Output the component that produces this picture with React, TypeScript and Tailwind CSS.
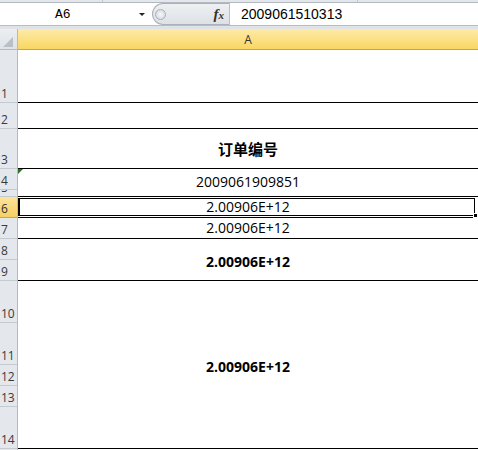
import React from 'react';

type RowHead = { label: string; cls: string; active?: boolean };

const rowHeads: RowHead[] = [
  { label: '1', cls: 'h-[53px]' },
  { label: '2', cls: 'h-[26px]' },
  { label: '3', cls: 'h-[40px]' },
  { label: '4', cls: 'h-[21px]' },
  { label: '5', cls: 'h-[7px]' },
  { label: '6', cls: 'h-[21px]', active: true },
  { label: '7', cls: 'h-[21px]' },
  { label: '8', cls: 'h-[21px]' },
  { label: '9', cls: 'h-[21px]' },
  { label: '10', cls: 'h-[42px]' },
  { label: '11', cls: 'h-[42px]' },
  { label: '12', cls: 'h-[21px]' },
  { label: '13', cls: 'h-[21px]' },
  { label: '14', cls: 'h-[42px]' },
];

function FormulaBar() {
  return (
    <div className="flex flex-col shrink-0">
      {/* ribbon edge */}
      <div className="flex h-[3px] bg-[#e3e6ea] border-b border-[#b3b9c1]">
        <div className="w-[103px] border-r border-[#c2c7ce]" />
        <div className="w-[255px] border-r border-[#c2c7ce]" />
      </div>
      <div className="flex h-[23px] border-b border-[#b7bdc5] bg-white">
        {/* name box */}
        <div className="w-[152px] flex items-center bg-white">
          <span className="pl-[55px] font-['Liberation_Mono',monospace] text-[13px] leading-none text-black">A6</span>
          <span className="ml-auto mr-[7px] w-0 h-0 border-l-[3px] border-r-[3px] border-t-[3px] border-l-transparent border-r-transparent border-t-[#222]" />
        </div>
        {/* splitter + fx */}
        <div className="w-[77px] flex items-center rounded-l-full border border-r-0 border-[#aab1ba] bg-linear-to-b from-[#eef0f3] to-[#dde1e6]">
          <div className="ml-[2px] w-[11px] h-[11px] rounded-full border border-[#a9b0b9] bg-radial from-[#f7f8fa] to-[#cfd4da]" />
          <span className="ml-auto mr-[5px] font-['Liberation_Serif',serif] italic font-bold text-[#333] text-[15px] leading-none">
            f<span className="text-[11px]">x</span>
          </span>
        </div>
        <div className="w-px bg-[#b9bfc7]" />
        <div className="flex-1 flex items-center pl-[11px] font-['Liberation_Sans',sans-serif] text-[14px] leading-none text-black">
          2009061510313
        </div>
      </div>
      <div className="h-[3px] bg-[#dfe3e8]" />
    </div>
  );
}

function RowHeaders() {
  return (
    <div className="w-[18px] shrink-0 flex flex-col border-r border-[#b3bac3] bg-[#e4e7eb]">
      <div className="h-[21px] shrink-0 border-b border-[#b3bac3] bg-linear-to-b from-[#eceef1] to-[#dfe3e8]">
        <svg width="17" height="20" viewBox="0 0 17 20" className="block">
          <polygon points="13,8 13,18 3,18" fill="#b9bfc7" />
        </svg>
      </div>
      {rowHeads.map((r) => (
        <div
          key={r.label}
          className={
            r.active
              ? `${r.cls} shrink-0 flex items-end overflow-hidden border-b border-[#c9a84c] bg-linear-to-b from-[#fce49a] to-[#f7d063] pl-[1px] pb-[1px] font-['Open_Sans',sans-serif] text-[12px] leading-[14px] text-[#2f2f2f]`
              : `${r.cls} shrink-0 flex items-end overflow-hidden border-b border-[#c5cad1] pl-[1px] pb-[1px] font-['Open_Sans',sans-serif] text-[12px] leading-[14px] text-[#3a3a3a]`
          }
        >
          {r.label}
        </div>
      ))}
      <div className="flex-1" />
    </div>
  );
}

function ColumnA() {
  return (
    <div className="flex-1 flex flex-col font-['Open_Sans',sans-serif] text-[14px] leading-[16px] text-black">
      <div className="h-[21px] shrink-0 flex items-end justify-center pb-[2px] border-b border-[#c5a54c] bg-linear-to-b from-[#fdeaa6] to-[#f9d760] font-['Open_Sans',sans-serif] text-[12px] leading-[14px] text-[#333]">
        A
      </div>
      <div className="h-[53px] shrink-0 border-b border-black" />
      <div className="h-[26px] shrink-0 border-b border-black" />
      <div className="h-[40px] shrink-0 flex items-center justify-center border-b border-black font-['Noto_Sans_CJK_SC',sans-serif] font-bold text-[15px]">
        订单编号
      </div>
      <div className="h-[21px] shrink-0 relative flex items-end justify-center">
        <svg width="5" height="5" viewBox="0 0 5 5" className="absolute left-0 top-0">
          <polygon points="0,0 5,0 0,5" fill="#217a21" />
        </svg>
        2009061909851
      </div>
      <div className="h-[7px] shrink-0 border-b border-black" />
      <div className="h-[21px] shrink-0 relative flex items-end justify-center pb-[2px] border-b border-black">
        2.00906E+12
        <div className="absolute top-[1px] bottom-[1px] left-0 right-[3px] border-y border-l-2 border-r border-black" />
        <div className="absolute top-[16px] right-0 w-[5px] h-[5px] bg-black border border-white" />
      </div>
      <div className="h-[21px] shrink-0 flex items-end justify-center pb-[2px] border-b border-black">
        2.00906E+12
      </div>
      <div className="h-[42px] shrink-0 flex items-end justify-center pb-[10px] border-b border-black font-bold">
        2.00906E+12
      </div>
      <div className="h-[168px] shrink-0 flex items-end justify-center pb-[73px] border-b border-black font-bold">
        2.00906E+12
      </div>
      <div className="flex-1" />
    </div>
  );
}

export default function App() {
  return (
    <div className="w-[478px] h-[450px] overflow-hidden bg-white flex flex-col">
      <FormulaBar />
      <div className="flex flex-1 min-h-0">
        <RowHeaders />
        <ColumnA />
      </div>
    </div>
  );
}
